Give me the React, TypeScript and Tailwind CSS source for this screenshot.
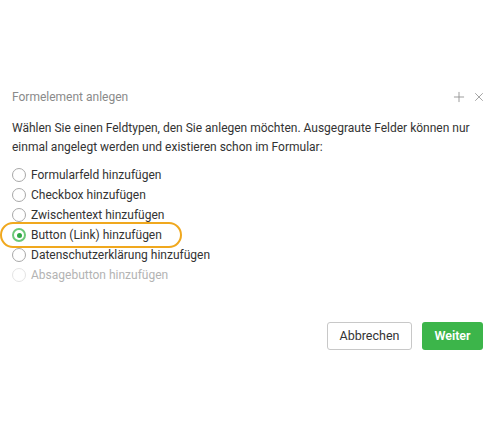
import { Plus, X } from "lucide-react";

const options = [
  { label: "Formularfeld hinzufügen" },
  { label: "Checkbox hinzufügen" },
  { label: "Zwischentext hinzufügen" },
  { label: "Button (Link) hinzufügen", checked: true },
  { label: "Datenschutzerklärung hinzufügen" },
  { label: "Absagebutton hinzufügen", disabled: true },
];

function Radio({ checked, disabled }: { checked?: boolean; disabled?: boolean }) {
  if (checked) {
    return (
      <span className="w-[14px] h-[14px] rounded-full border-2 border-[#6cc878] flex items-center justify-center shrink-0">
        <span className="w-[5px] h-[5px] rounded-full bg-[#2fa845]" />
      </span>
    );
  }
  return (
    <span
      className={
        "w-[14px] h-[14px] rounded-full border shrink-0 bg-white " +
        (disabled ? "border-[#e4e4e4]" : "border-[#a8a8a8]")
      }
    />
  );
}

export default function App() {
  return (
    <div className="w-[490px] h-[440px] bg-white font-['Roboto',sans-serif] text-[#333]">
      <div className="pt-[88px] pl-[12px] pr-[7px]">
        <div className="flex items-center justify-between h-[18px]">
          <span className="text-[12px] text-[#8a8a8a]">Formelement anlegen</span>
          <div className="flex items-center gap-[5px] text-[#8f8f8f] -mr-[3px]">
            <Plus size={16} strokeWidth={1.3} />
            <X size={14} strokeWidth={1.4} />
          </div>
        </div>

        <p className="mt-[13px] text-[12px] leading-[19px] text-[#333]">
          Wählen Sie einen Feldtypen, den Sie anlegen möchten. Ausgegraute Felder können nur einmal angelegt werden und existieren schon im Formular:
        </p>

        <ul className="mt-[8px] flex flex-col">
          {options.map((o) => (
            <li key={o.label} className="h-[20px] flex">
              <div
                className={
                  "flex items-center gap-[5px] h-[20px] " +
                  (o.checked
                    ? "-ml-[9px] pl-[9px] pr-[17px] rounded-[12px] outline-2 outline-[#f0a81e] outline-offset-[1px]"
                    : "")
                }
              >
                <Radio checked={o.checked} disabled={o.disabled} />
                <span className={"text-[12px] " + (o.disabled ? "text-[#b3b3b3]" : "text-[#333]")}>
                  {o.label}
                </span>
              </div>
            </li>
          ))}
        </ul>

        <div className="mt-[37px] flex justify-end gap-[10px]">
          <button className="h-[28px] w-[85px] rounded-[3px] border border-[#c8c8c8] bg-white text-[12.5px] text-[#333]">
            Abbrechen
          </button>
          <button className="h-[28px] w-[61px] rounded-[3px] bg-[#3cb54a] text-[12.5px] font-semibold text-white">
            Weiter
          </button>
        </div>
      </div>
    </div>
  );
}
